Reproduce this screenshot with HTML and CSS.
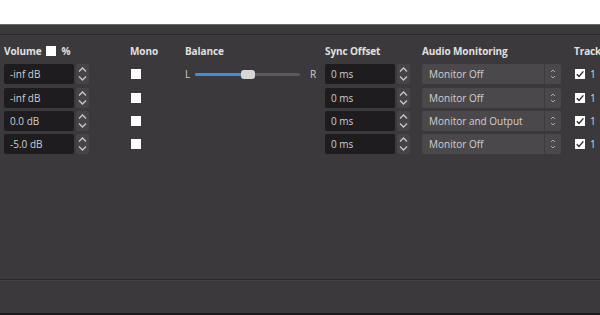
FILE: index.html
```html
<!DOCTYPE html>
<html lang="en">
<head>
  <meta charset="UTF-8" />
  <title>Advanced Audio Properties</title>
  <link rel="stylesheet" href="styles.css">
</head>
<body>
  <div class="top"></div>

  <div class="dock">
    <div class="toolbar"></div>

    <div class="mixer">
      <!-- Header -->
      <div class="head head-volume">Volume <span class="box"></span> %</div>
      <div class="head">Mono</div>
      <div class="head">Balance</div>
      <div class="head">Sync Offset</div>
      <div class="head">Audio Monitoring</div>
      <div class="head head-tracks">Tracks</div>

      <!-- Row 1 -->
      <div class="cell"><div class="spin"><span class="field">-inf dB</span><span class="arrows"><svg viewBox="0 0 12 20"><path d="M2.5 7.5 6 4l3.5 3.5M2.5 12.5 6 16l3.5-3.5"/></svg></span></div></div>
      <div class="cell"><span class="box"></span></div>
      <div class="cell balance">
        <span class="lr">L</span>
        <div class="slider"><div class="fill"></div><div class="knob"></div></div>
        <span class="lr">R</span>
      </div>
      <div class="cell"><div class="spin"><span class="field">0 ms</span><span class="arrows"><svg viewBox="0 0 12 20"><path d="M2.5 7.5 6 4l3.5 3.5M2.5 12.5 6 16l3.5-3.5"/></svg></span></div></div>
      <div class="cell"><div class="combo"><span class="combo-text">Monitor Off</span><span class="combo-arrows"><svg viewBox="0 0 10 16"><path d="M3 6 5 4l2 2M3 10l2 2 2-2"/></svg></span></div></div>
      <div class="cell"><span class="box checked"><svg viewBox="0 0 10 10"><path d="M1.8 5.2 4 7.4 8.4 2.4"/></svg></span><span class="num">1</span></div>

      <!-- Row 2 -->
      <div class="cell"><div class="spin"><span class="field">-inf dB</span><span class="arrows"><svg viewBox="0 0 12 20"><path d="M2.5 7.5 6 4l3.5 3.5M2.5 12.5 6 16l3.5-3.5"/></svg></span></div></div>
      <div class="cell"><span class="box"></span></div>
      <div class="cell"></div>
      <div class="cell"><div class="spin"><span class="field">0 ms</span><span class="arrows"><svg viewBox="0 0 12 20"><path d="M2.5 7.5 6 4l3.5 3.5M2.5 12.5 6 16l3.5-3.5"/></svg></span></div></div>
      <div class="cell"><div class="combo"><span class="combo-text">Monitor Off</span><span class="combo-arrows"><svg viewBox="0 0 10 16"><path d="M3 6 5 4l2 2M3 10l2 2 2-2"/></svg></span></div></div>
      <div class="cell"><span class="box checked"><svg viewBox="0 0 10 10"><path d="M1.8 5.2 4 7.4 8.4 2.4"/></svg></span><span class="num">1</span></div>

      <!-- Row 3 -->
      <div class="cell"><div class="spin"><span class="field">0.0 dB</span><span class="arrows"><svg viewBox="0 0 12 20"><path d="M2.5 7.5 6 4l3.5 3.5M2.5 12.5 6 16l3.5-3.5"/></svg></span></div></div>
      <div class="cell"><span class="box"></span></div>
      <div class="cell"></div>
      <div class="cell"><div class="spin"><span class="field">0 ms</span><span class="arrows"><svg viewBox="0 0 12 20"><path d="M2.5 7.5 6 4l3.5 3.5M2.5 12.5 6 16l3.5-3.5"/></svg></span></div></div>
      <div class="cell"><div class="combo"><span class="combo-text">Monitor and Output</span><span class="combo-arrows"><svg viewBox="0 0 10 16"><path d="M3 6 5 4l2 2M3 10l2 2 2-2"/></svg></span></div></div>
      <div class="cell"><span class="box checked"><svg viewBox="0 0 10 10"><path d="M1.8 5.2 4 7.4 8.4 2.4"/></svg></span><span class="num">1</span></div>

      <!-- Row 4 -->
      <div class="cell"><div class="spin"><span class="field">-5.0 dB</span><span class="arrows"><svg viewBox="0 0 12 20"><path d="M2.5 7.5 6 4l3.5 3.5M2.5 12.5 6 16l3.5-3.5"/></svg></span></div></div>
      <div class="cell"><span class="box"></span></div>
      <div class="cell"></div>
      <div class="cell"><div class="spin"><span class="field">0 ms</span><span class="arrows"><svg viewBox="0 0 12 20"><path d="M2.5 7.5 6 4l3.5 3.5M2.5 12.5 6 16l3.5-3.5"/></svg></span></div></div>
      <div class="cell"><div class="combo"><span class="combo-text">Monitor Off</span><span class="combo-arrows"><svg viewBox="0 0 10 16"><path d="M3 6 5 4l2 2M3 10l2 2 2-2"/></svg></span></div></div>
      <div class="cell"><span class="box checked"><svg viewBox="0 0 10 10"><path d="M1.8 5.2 4 7.4 8.4 2.4"/></svg></span><span class="num">1</span></div>
    </div>

    <div class="footer"></div>
  </div>
</body>
</html>
```

FILE: styles.css
```css
body {
  margin: 0;
  background-color: #ffffff;
  font-family: 'Open Sans', 'Noto Sans', sans-serif;
  overflow: hidden;
  width: 600px;
  height: 315px;
}

.top {
  height: 24px;
}

.dock {
  height: 291px;
  box-sizing: border-box;
  background-color: #3b393b;
  border-top: 1px solid #6c6b6c;
  border-bottom: 2px solid #1c1b1c;
  display: flex;
  flex-direction: column;
  overflow: hidden;
}

.toolbar {
  height: 9px;
  border-bottom: 1px solid #2a292a;
  flex: none;
}

.mixer {
  flex: 1;
  display: grid;
  grid-template-columns: 126px 55px 140px 97px 152px 26px;
  grid-template-rows: 16px 27px 23px 23px 23px;
  align-content: start;
  padding: 8px 0 0 4px;
  color: #d2d2d2;
  overflow: hidden;
}

.head {
  font-size: 10px;
  font-weight: bold;
  color: #e0e0e0;
  display: flex;
  align-items: center;
  gap: 5px;
  white-space: nowrap;
  letter-spacing: -0.1px;
}

.head-tracks {
  overflow: hidden;
}

.cell {
  display: flex;
  align-items: center;
  font-size: 10px;
  white-space: nowrap;
}

.mixer > .cell:nth-child(-n+12) {
  padding-top: 3px;
}

.box {
  display: inline-flex;
  width: 10px;
  height: 10px;
  background-color: #ffffff;
  flex: none;
}

.box svg {
  width: 10px;
  height: 10px;
  fill: none;
  stroke: #2a2a2a;
  stroke-width: 1.4;
}

.cell .box {
  margin-left: 1px;
}

.num {
  margin-left: 5px;
  color: #d8d8d8;
}

.spin {
  display: flex;
  height: 20px;
  width: 85px;
}

.field {
  flex: 1;
  background-color: #1e1c1e;
  border-radius: 2px;
  display: flex;
  align-items: center;
  padding-left: 6px;
  color: #cfcfcf;
}

.arrows {
  width: 13px;
  margin-left: 2px;
  background-color: #464446;
  border-radius: 2px;
  display: flex;
}

.arrows svg {
  width: 13px;
  height: 20px;
  fill: none;
  stroke: #c9c9c9;
  stroke-width: 1.3;
}

.lr {
  width: 10px;
  color: #cfcfcf;
  font-size: 10px;
}

.slider {
  position: relative;
  width: 105px;
  height: 3px;
  margin-right: 10px;
  background-color: #5b595b;
  border-radius: 2px;
}

.fill {
  width: 50px;
  height: 3px;
  background-color: #3f8fe0;
  border-radius: 2px;
}

.knob {
  position: absolute;
  left: 46px;
  top: -3px;
  width: 14px;
  height: 9px;
  background-color: #d6d6d6;
  border-radius: 3px;
}

.combo {
  display: flex;
  width: 139px;
  height: 20px;
  background-color: #4a484a;
  border-radius: 2px;
}

.combo-text {
  flex: 1;
  display: flex;
  align-items: center;
  padding-left: 7px;
  color: #d0d0d0;
}

.combo-arrows {
  width: 16px;
  border-left: 1px solid #3e3c3e;
  display: flex;
  align-items: center;
  justify-content: center;
}

.combo-arrows svg {
  width: 10px;
  height: 16px;
  fill: none;
  stroke: #a9a9a9;
  stroke-width: 1;
}

.footer {
  height: 33px;
  flex: none;
  border-top: 1px solid #2c2b2c;
  box-shadow: inset 0 1px 0 #444244;
}
```
